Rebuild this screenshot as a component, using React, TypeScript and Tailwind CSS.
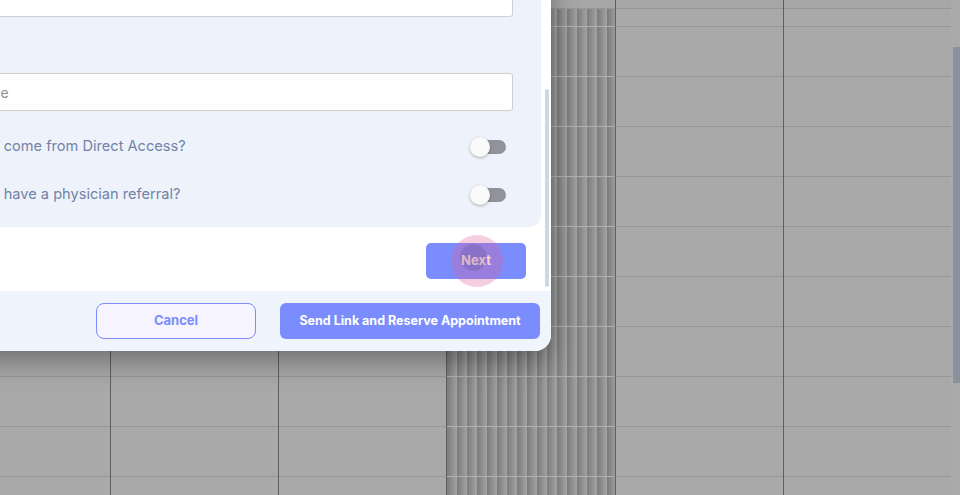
import type { FC } from "react";

const font = "font-['Inter','Noto_Sans',sans-serif]";

const ROW_COUNT = 10;

const stripes = "bg-[repeating-linear-gradient(90deg,#7c7c7c_0px,#8a8a8a_4px,#a4a4a4_10px)]";

const GridColumn: FC<{ className: string; striped?: boolean; lastBorder?: boolean }> = ({
	className,
	striped = false,
	lastBorder = true,
}) => {
	const lineTone = striped ? "border-[#b1b1b1]" : "border-[#979797]";
	return (
		<div
			className={`flex shrink-0 flex-col ${className} ${
				lastBorder ? "border-r border-[#5f5f5f]" : ""
			}`}
		>
			<div className="h-[9px] shrink-0 border-b border-[#979797] bg-[#a7a7a7]" />
			<div className={`h-[18px] shrink-0 border-b ${lineTone} ${striped ? stripes : ""}`} />
			{Array.from({ length: ROW_COUNT }, (_, rowIndex) => (
				<div
					key={rowIndex}
					className={`h-[50px] shrink-0 border-b ${lineTone} ${striped ? stripes : ""}`}
				/>
			))}
		</div>
	);
};

const Toggle: FC = () => (
	<div className="relative h-[20px] w-[36px] shrink-0">
		<div className="absolute left-[4px] top-[3px] h-[14px] w-[32px] rounded-full bg-[#909399]" />
		<div className="absolute left-0 top-0 h-[20px] w-[20px] rounded-full bg-[#fafafa] shadow-[0_1px_3px_rgba(0,0,0,0.3)]" />
	</div>
);

const ToggleRow: FC<{ label: string; className?: string }> = ({ label, className = "" }) => (
	<div className={`flex h-[40px] items-center justify-between pr-[7px] ${className}`}>
		<span className="whitespace-nowrap text-[14.6px] text-[#7182a8]">{label}</span>
		<Toggle />
	</div>
);

export default function App() {
	return (
		<div className={`relative h-[495px] w-[960px] overflow-hidden bg-[#a9a9a9] ${font}`}>
			{/* dimmed calendar behind the dialog */}
			<div className="flex h-full">
				<GridColumn className="w-[111px]" />
				<GridColumn className="w-[168px]" />
				<GridColumn className="w-[168px]" />
				<GridColumn className="w-[169px]" striped />
				<GridColumn className="w-[168px]" />
				<GridColumn className="w-[167px]" lastBorder={false} />
				<div className="flex flex-1 justify-end bg-[#aaaaaa]">
					<div className="mt-[47px] h-[336px] w-[7px] bg-[#8a919d]" />
				</div>
			</div>

			{/* dialog */}
			<div className="absolute bottom-[144px] left-[-125px] flex w-[676px] flex-col overflow-hidden rounded-br-2xl bg-white shadow-[0_10px_28px_rgba(0,0,0,0.35)]">
				<div className="relative bg-white">
					<div className="mr-[10px] rounded-br-xl bg-[#eef3fb] pb-[12px] pl-[24px] pr-[28px] pt-[20px]">
						<input
							readOnly
							className="block h-[38px] w-full rounded-[3px] border border-[#cfcfcf] bg-white px-[12px] text-[14px] outline-none"
						/>
						<input
							readOnly
							placeholder="Referrer Name"
							className="mt-[56px] block h-[38px] w-full rounded-[3px] border border-[#cfcfcf] bg-white px-[12px] text-[14px] outline-none placeholder:text-[#8d8d8d]"
						/>
						<ToggleRow
							className="mt-[16px]"
							label="Did the patient come from Direct Access?"
						/>
						<ToggleRow
							className="mt-[8px]"
							label="Did the patient have a physician referral?"
						/>
					</div>
					<div className="flex justify-end pb-[12px] pr-[25px] pt-[16px]">
						<button className="h-[36px] w-[100px] rounded-[5px] bg-[#7b8cfd] text-[13px] font-bold text-white">
							Next
						</button>
					</div>
					<div className="absolute bottom-[4px] right-[2px] h-[198px] w-[4px] rounded-full bg-[#cfd7e7]" />
				</div>
				<div className="flex h-[60px] items-center justify-end gap-[24px] bg-[#eff4fd] pr-[11px]">
					<button className="h-[36px] w-[160px] rounded-[8px] border border-[#7b8cfd] bg-[#f6f4fe] text-[13px] font-bold text-[#7b8cfd]">
						Cancel
					</button>
					<button className="h-[36px] w-[260px] rounded-[6px] bg-[#7b8cfd] text-[12.5px] font-bold text-white">
						Send Link and Reserve Appointment
					</button>
				</div>
			</div>

			{/* click indicator */}
			<div className="absolute left-[451px] top-[235px] flex h-[52px] w-[52px] items-center justify-center rounded-full bg-[#de5f98]/30">
				<div className="mb-[8px] mr-[8px] h-[27px] w-[27px] rounded-full bg-black/10" />
			</div>
		</div>
	);
}
